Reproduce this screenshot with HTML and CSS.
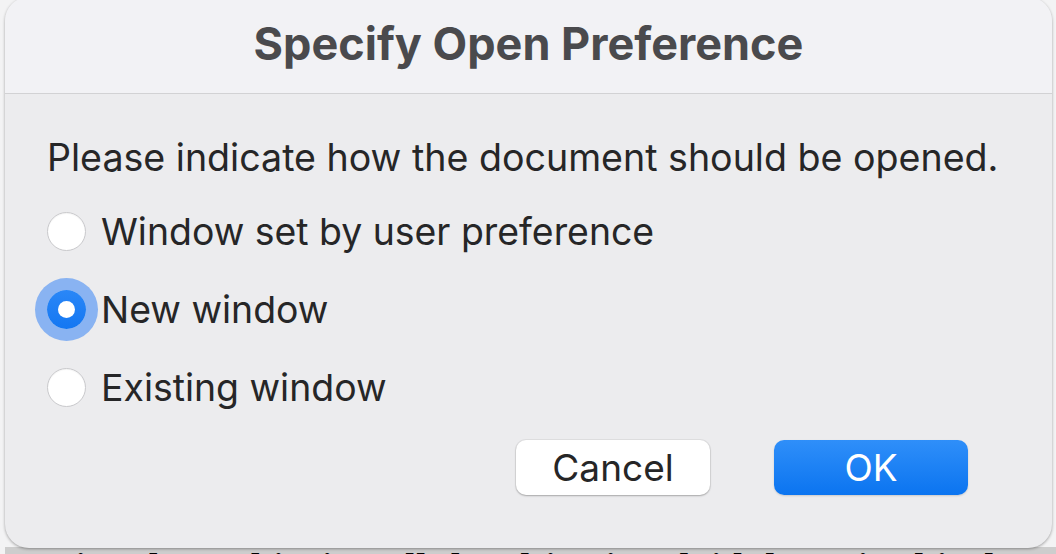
FILE: index.html
```html
<!DOCTYPE html>
<html lang="en">
<head>
<meta charset="utf-8">
<title>Specify Open Preference</title>
<link rel="stylesheet" href="styles.css">
</head>
<body>
<div class="screen">
  <div class="dialog">
    <header class="dialog-header">
      <h1 class="dialog-title">Specify Open Preference</h1>
    </header>
    <div class="dialog-body">
      <p class="prompt">Please indicate how the document should be opened.</p>
      <div class="options">
        <div class="option"><span class="radio"></span><span class="option-label">Window set by user preference</span></div>
        <div class="option"><span class="radio radio-on"><span class="radio-dot"></span></span><span class="option-label">New window</span></div>
        <div class="option"><span class="radio"></span><span class="option-label">Existing window</span></div>
      </div>
      <div class="actions">
        <button class="btn btn-cancel">Cancel</button>
        <button class="btn btn-ok">OK</button>
      </div>
    </div>
  </div>
  <div class="doc-line">aimed at achieving all the objectives laid down in this document</div>
</div>
</body>
</html>
```
FILE: styles.css
```css
html, body {
  margin: 0;
  padding: 0;
}
body {
  background: #f3f3f4;
  width: 1056px;
  height: 554px;
  overflow: hidden;
  font-family: "Inter", "Liberation Sans", sans-serif;
}
.screen {
  width: 1056px;
  height: 554px;
  overflow: hidden;
  background: #f3f3f4;
}
.dialog {
  position: relative;
  z-index: 1;
  margin: -3px 0 0 5px;
  width: 1047px;
  height: 551px;
  border-radius: 24px;
  background: #ececee;
  box-shadow: 0 1px 3px rgba(0, 0, 0, 0.35);
  display: flex;
  flex-direction: column;
  overflow: hidden;
}
.dialog-header {
  height: 97px;
  box-sizing: border-box;
  padding-bottom: 4px;
  background: #f2f2f5;
  border-bottom: 1px solid #d2d2d4;
  display: flex;
  align-items: center;
  justify-content: center;
}
.dialog-title {
  margin: 0;
  font-size: 45px;
  font-weight: 700;
  color: #4a4a4d;
  letter-spacing: 0;
}
.dialog-body {
  flex: 1;
  padding: 40px 0 0 42px;
  display: flex;
  flex-direction: column;
}
.prompt {
  margin: 0 0 19px;
  font-size: 37.6px;
  line-height: 48px;
  color: #262627;
}
.options {
  display: flex;
  flex-direction: column;
  gap: 18px;
}
.option {
  height: 60px;
  display: flex;
  align-items: center;
  gap: 15px;
}
.option-label {
  font-size: 37.4px;
  color: #262627;
}
.radio {
  width: 39px;
  height: 39px;
  box-sizing: border-box;
  border-radius: 50%;
  background: #ffffff;
  border: 1px solid #c9c9cc;
  box-shadow: inset 0 1px 1px rgba(0, 0, 0, 0.04);
  display: flex;
  align-items: center;
  justify-content: center;
  flex: none;
}
.radio-on {
  border: none;
  background: linear-gradient(#2a87f7, #1477f2);
  box-shadow: 0 0 0 12px rgba(38, 122, 246, 0.5);
}
.radio-dot {
  width: 17px;
  height: 17px;
  border-radius: 50%;
  background: #ffffff;
}
.actions {
  margin-top: 23px;
  padding-right: 84px;
  display: flex;
  justify-content: flex-end;
  gap: 64px;
}
.btn {
  width: 194px;
  height: 55px;
  border-radius: 10px;
  border: none;
  font-family: "Inter", "Liberation Sans", sans-serif;
  font-size: 37px;
  padding: 0;
}
.btn-cancel {
  background: #ffffff;
  color: #262627;
  box-shadow: 0 1px 2px rgba(0, 0, 0, 0.25), 0 0 0 1px rgba(0, 0, 0, 0.05);
}
.btn-ok {
  background: linear-gradient(#2f8ff9, #0b74f0);
  color: #ffffff;
  box-shadow: 0 1px 2px rgba(0, 0, 0, 0.15);
}
.doc-line {
  margin: -1px 0 0 5px;
  padding-top: 1px;
  background: #cdcdcd;
  font-family: "Liberation Serif", serif;
  font-weight: 700;
  font-size: 40px;
  line-height: 40px;
  color: #000000;
  white-space: nowrap;
  padding-left: 50px;
}
```
